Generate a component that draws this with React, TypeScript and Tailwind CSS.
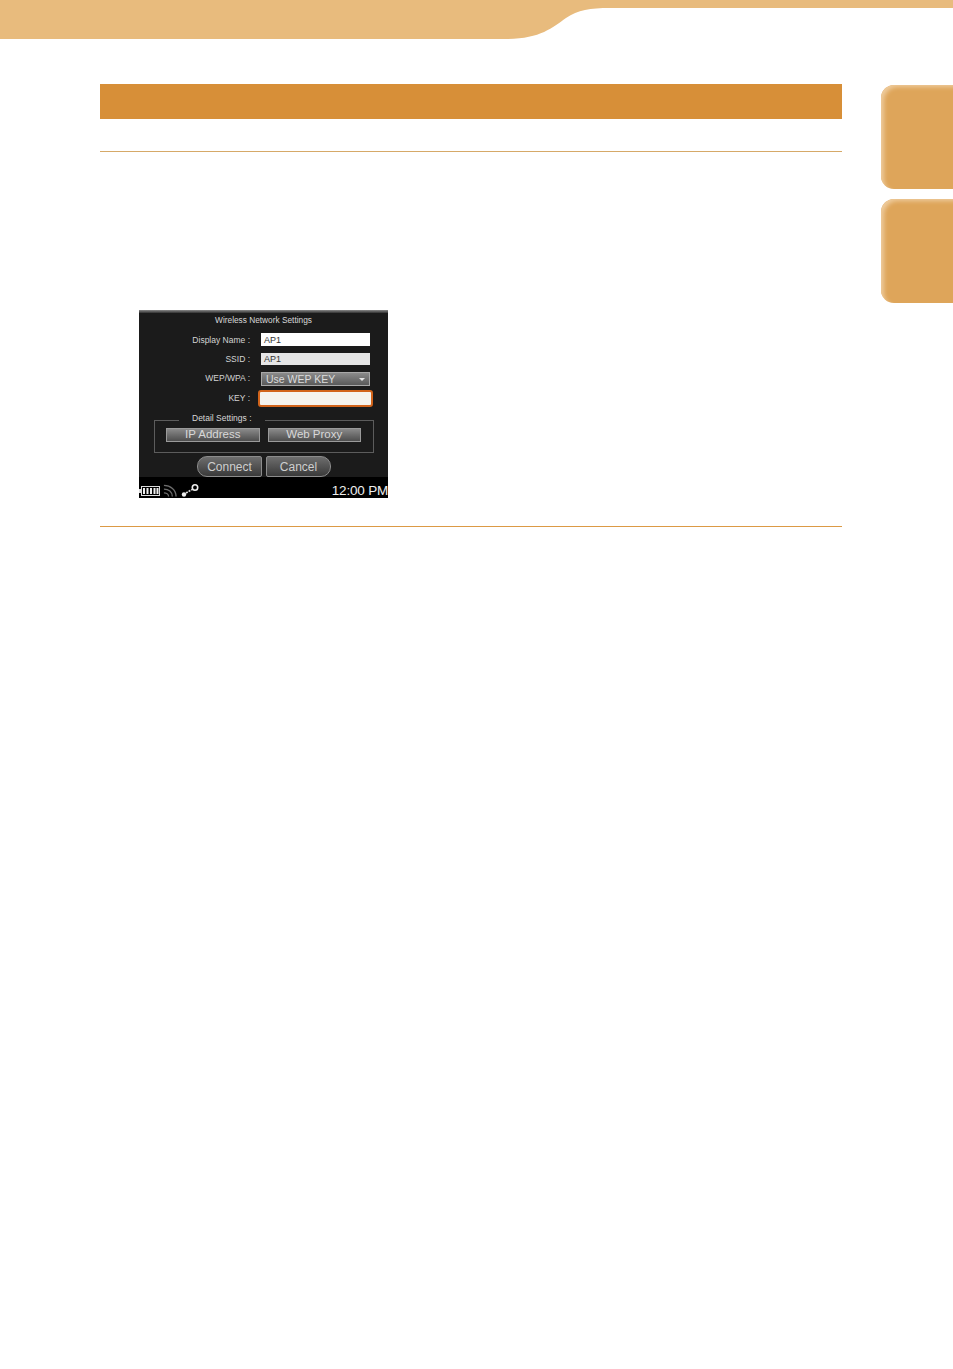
const font = 'font-["Liberation_Sans",Arial,sans-serif]';

function HeaderBand() {
  return (
    <svg className="block w-[953px] h-[40px]" viewBox="0 0 953 40">
      <path d="M0 0H953V8H610C590 8 578 10 566 18C552 28 540 39 505 39H0Z" fill="#e8bb7d" />
    </svg>
  );
}

function SideTab() {
  return <div className="w-[72px] h-[104px] rounded-l-[13px] bg-[#dea55a] shadow-[inset_4px_3px_4px_-1px_#eecb9c]" />;
}

function Row({ label, className, labelClass = 'pt-[1px]', children }: { label: string; className: string; labelClass?: string; children: React.ReactNode }) {
  return (
    <div className={`flex items-center h-[14px] ${className}`}>
      <div className={`w-[111px] text-right text-[8.5px] text-[#d4d4d4] whitespace-nowrap ${labelClass}`}>{label}</div>
      <div className="ml-[11px] w-[109px]">{children}</div>
    </div>
  );
}

function GrayButton({ label }: { label: string }) {
  return (
    <div className="w-[93.5px] h-[14px] flex items-center justify-center text-[11.5px] leading-none text-[#d8d8d8] border border-[#9a9a9a] bg-gradient-to-b from-[#8a8a8a] to-[#4e4e4e]">
      {label}
    </div>
  );
}

function PillButton({ label, side }: { label: string; side: 'left' | 'right' }) {
  return (
    <div
      className={
        side === 'left'
          ? 'w-[65px] h-[21px] flex items-center justify-center text-[12px] text-[#cfcfcf] border border-[#8c8c8c] rounded-l-[10px] rounded-r-[2px] bg-gradient-to-b from-[#6e6e6e] to-[#3a3a3a]'
          : 'w-[65px] h-[21px] flex items-center justify-center text-[12px] text-[#cfcfcf] border border-[#8c8c8c] rounded-r-[10px] rounded-l-[2px] bg-gradient-to-b from-[#6e6e6e] to-[#3a3a3a]'
      }
    >
      {label}
    </div>
  );
}

function StatusIcons() {
  return (
    <div className="flex items-center gap-[3px]">
      <svg width="21" height="12" viewBox="0 0 21 12">
        <rect x="0" y="4" width="2" height="4" fill="#ddd" />
        <rect x="2.5" y="1.5" width="18" height="9" fill="none" stroke="#ddd" />
        <path d="M5 3v6M8.500 3v6M12 3v6M15.500 3v6M18.500 3v6" stroke="#eee" strokeWidth="2" />
      </svg>
      <svg width="14" height="13" viewBox="0 0 15 13" fill="none" stroke="#6d6d6d" strokeWidth="1.400">
        <path d="M1 1C8 1 14 6 14 13M1 5C6 5 10 8 10 13M1 9C3.500 9 6 10.500 6 13" />
      </svg>
      <svg className="ml-[1px]" width="18" height="13" viewBox="0 0 18 13" fill="none">
        <circle cx="3" cy="10.500" r="2.200" fill="#eee" />
        <path d="M5 9L11 5.500" stroke="#ddd" strokeWidth="1.600" strokeDasharray="2 1" />
        <circle cx="14" cy="3.500" r="2.700" stroke="#eee" strokeWidth="1.600" />
      </svg>
    </div>
  );
}

function DeviceScreen() {
  return (
    <div className={`w-[249px] h-[188px] bg-[#1b1b1b] flex flex-col ${font}`}>
      <div className="h-[3px] bg-gradient-to-b from-[#8a8a8a] to-[#333]" />
      <div className="mt-[2px] text-center text-[8.3px] leading-[10px] text-[#d8d8d8]">Wireless Network Settings</div>
      <Row label="Display Name :" className="mt-[7px]" labelClass="pt-[3px]">
        <div className="h-[13px] bg-white text-[9px] leading-[14px] pl-[3px] text-[#333]">AP1</div>
      </Row>
      <Row label="SSID :" className="mt-[6px]">
        <div className="h-[12px] bg-[#e6e6e6] text-[9px] leading-[12px] pl-[3px] text-[#333]">AP1</div>
      </Row>
      <Row label="WEP/WPA :" className="mt-[6px]" labelClass="pb-[1px]">
        <div className="h-[14px] flex items-center justify-between pl-[4px] pr-[4px] text-[10.5px] leading-none text-[#dcdcdc] border border-[#a8a8a8] bg-gradient-to-b from-[#8b8b8b] to-[#5a5a5a]">
          <span>Use WEP KEY</span>
          <span className="w-0 h-0 border-x-[3px] border-x-transparent border-t-[3px] border-t-[#e5e5e5]" />
        </div>
      </Row>
      <Row label="KEY :" className="mt-[5px]">
        <div className="-mx-[3px] h-[17px] bg-[#f5f3ee] border-[2.5px] border-[#d2641b] rounded-[3px]" />
      </Row>
      <div className="relative mt-[15px] mx-[15px] h-[33px] w-[220px] border border-[#5c5c5c] px-[11px] pt-[7px]">
        <div className="absolute left-[24px] -top-[8px] px-[13px] bg-[#1b1b1b] text-[8.5px] leading-[10px] text-[#d8d8d8]">Detail Settings :</div>
        <div className="flex gap-[8px]">
          <GrayButton label="IP Address" />
          <GrayButton label="Web Proxy" />
        </div>
      </div>
      <div className="mt-[3px] pl-[58px] flex gap-[4px]">
        <PillButton label="Connect" side="left" />
        <PillButton label="Cancel" side="right" />
      </div>
      <div className="flex-1 bg-black flex items-end justify-between pb-[1px]">
        <StatusIcons />
        <span className="text-[13.500px] leading-[13px] text-[#eeeeee] tracking-[-0.2px]">12:00 PM</span>
      </div>
    </div>
  );
}

export default function App() {
  return (
    <div className="w-[953px] h-[1369px] bg-white overflow-hidden">
      <HeaderBand />
      <div className="mt-[45px] flex items-start">
        <main className="ml-[100px] w-[742px]">
          <div className="h-[35px] -mt-[1px] bg-[#d78f38]" />
          <div className="mt-[32px] h-[1px] bg-[#d6a968]" />
          <div className="mt-[158px] ml-[39px]">
            <DeviceScreen />
          </div>
          <div className="mt-[28px] h-[1px] bg-[#dc9a45]" />
        </main>
        <aside className="ml-[39px] flex flex-col gap-[10px]">
          <SideTab />
          <SideTab />
        </aside>
      </div>
    </div>
  );
}
